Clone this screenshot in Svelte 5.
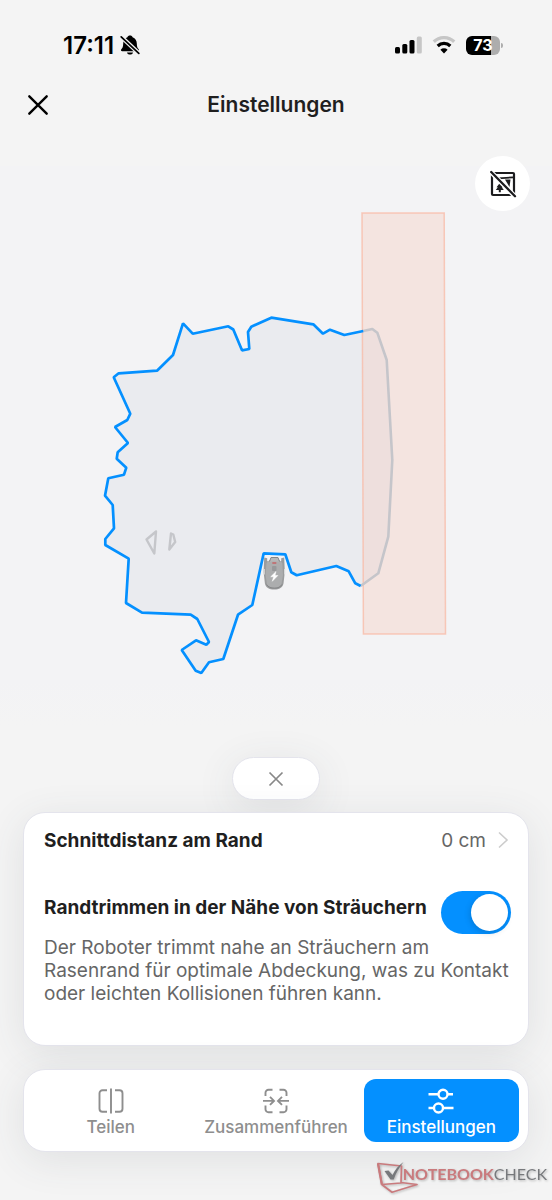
<script lang="ts">
  const boundary =
    '363.3,331 344.3,335 330,329.7 323,333.7 313.3,324.3 271.3,317.7 251.3,326.7 248,332 249.3,349 242,350.3 233.3,329.5 228.3,326.3 192.7,333.7 183,323.3 173,355 157,370.7 118.7,373.3 113.7,377.3 130.3,413.7 127.3,420 115,427 128,443 117.7,452.3 116.7,458.7 126.3,467.7 124,474.7 108.3,478.3 105,495.7 112.7,505 114,528.3 105.3,539 105.3,545 128.7,558.7 126,603 142,612.7 190.7,614.7 197.3,619 209,642 206.3,644.7 196,640.3 181.7,650 195.7,670.7 201.3,673 209,662.3 223.3,659 238,614.7 252.3,605 263.7,553.3 285.3,554.3 291.3,572.3 296.7,575.3 336.3,566 348.7,571.3 355.3,583.3 360.7,586';
  const blockedEdge = '360.7,586 378.3,573.3 388.3,536.7 392.3,460 386.7,360 377.3,332.7 372.3,329 363.3,331';

  let trimNearShrubs = $state(true);
  let active = $state('Einstellungen');
</script>

<div class="screen">
  <div class="status">
    <div class="clock">
      <span>17:11</span>
      <svg width="20" height="20" viewBox="0 0 20 20" aria-hidden="true">
        <path d="M10 .6c1.300 0 2.300.7 2.600 1.700 2.800 1 4.200 3.300 4.200 6.200 0 3.300.7 4.500 1.900 5.700.7.800.3 2-.9 2H2.200c-1.200 0-1.600-1.200-.9-2 1.200-1.200 1.900-2.400 1.900-5.700 0-2.900 1.400-5.200 4.200-6.200C7.700 1.300 8.700.6 10 .6z" />
        <path d="M7 17.400h6c-.3 1.400-1.400 2.200-3 2.200s-2.700-.8-3-2.200z" />
        <path d="M.6 1.200l18.400 17.200" stroke="#f4f4f4" stroke-width="4.200" />
        <path d="M1.200 1.800l17.600 16.600" stroke="#000" stroke-width="1.700" stroke-linecap="round" />
      </svg>
    </div>
    <div class="signals">
      <svg width="27" height="18" viewBox="0 0 27 18" aria-hidden="true">
        <rect x="0" y="11" width="5" height="6.500" rx="1.500" />
        <rect x="7.300" y="8" width="5" height="9.500" rx="1.500" />
        <rect x="14.500" y="4" width="5" height="13.500" rx="1.500" />
        <rect x="21.800" y=".5" width="5" height="17" rx="1.500" fill="#c6c6c6" />
      </svg>
      <svg width="24" height="18" viewBox="0 0 24 18" fill="none" aria-hidden="true">
        <path d="M1.800 5.800a14.600 14.600 0 0 1 20.400 0" stroke="#c6c6c6" stroke-width="3.300" />
        <path d="M5.700 10a9 9 0 0 1 12.600 0" stroke="#000" stroke-width="3.200" />
        <path d="M12 17.400l-3.600-3.700a5.200 5.200 0 0 1 7.200 0z" fill="#000" />
      </svg>
      <div class="battery"><span>73</span><i></i></div>
    </div>
  </div>

  <header>
    <button class="close" aria-label="Schließen">
      <svg width="22" height="22" viewBox="0 0 22 22" aria-hidden="true">
        <path d="M2.300 2.300l17.400 17.400M19.700 2.300L2.300 19.700" stroke="#000" stroke-width="2.400" stroke-linecap="round" />
      </svg>
    </button>
    <h1>Einstellungen</h1>
  </header>

  <main>
    <svg class="map" viewBox="0 166 552 560" role="img" aria-label="Karte">
      <polygon points="{boundary} {blockedEdge}" fill="#eaebef" />
      <polygon points="362,213 444.200,213 445.500,634 363.400,634" fill="#f7cbbd" fill-opacity=".36" stroke="#f8b9a6" stroke-opacity=".75" stroke-width="1.500" />
      <polyline points={blockedEdge} fill="none" stroke="#c5c5ca" stroke-width="2.600" stroke-linejoin="round" />
      <polyline points={boundary} fill="none" stroke="#0490ff" stroke-width="2.700" stroke-linejoin="bevel" />
      <g fill="none" stroke="#c5c6ca" stroke-width="2.400" stroke-linejoin="round">
        <path d="M156 531.500L146.500 539.500L154.300 553.500Z" />
        <path d="M171 533.500L173.300 534.500L175.200 542L169.300 549.500Z" />
      </g>
      <g>
        <path d="M264.200 557.500l3 .8v3h14v-3l3-.8.6 14.500-1.300 11.500c-1 4-4 6-9.300 6s-8.300-2-9.300-6l-1.300-11.500z" fill="#9b9c9d" />
        <path d="M264.200 569v5.500M284.600 569v5.500" stroke="#dcdddd" stroke-width="1.200" />
        <path d="M266.500 563l3-3h9.800l3 3 .7 12-1.500 9c-1 2.500-3.500 3.700-7.200 3.700s-6.300-1.200-7.300-3.700l-1.500-9z" fill="#acadae" />
        <path d="M269.500 561.500l1.500-4h7l1.500 4" fill="#b6b7b8" stroke="#858688" stroke-width="1" />
        <path d="M272.300 563h4" stroke="#c4686a" stroke-width="1.600" />
        <rect x="272" y="566" width="4.500" height="5" rx="1" fill="#98999b" />
        <path d="M266.500 584.500c1.500 2.500 4.500 3.700 8 3.700s6-1.200 7.500-3.700" fill="none" stroke="#858688" stroke-width="1" />
        <path d="M276 571.500l-5.300 5.300h2.900l-1.300 4.500 5.600-5.800H275z" fill="#fff" stroke="#fff" stroke-width=".5" />
      </g>
    </svg>
    <button class="layer" aria-label="Sträucher ausblenden">
      <svg width="28" height="28" viewBox="0 0 28 28" fill="none" aria-hidden="true">
        <rect x="3" y="3" width="22" height="22" rx="1" stroke="#1c1c1e" stroke-width="2.200" />
        <path d="M9 8.300l15-.9" stroke="#1c1c1e" stroke-width="1.700" />
        <path d="M16 9.500h5.500l-1 7.500z" fill="#1c1c1e" />
        <path d="M10.800 13l-3.300 4.200h1.300L6.800 20h3v2.300h2V20h3l-2-2.800h1.300z" fill="#1c1c1e" />
        <path d="M1.500 1.500l25 25.500" stroke="#fff" stroke-width="4.800" />
        <path d="M2.200 2l23.800 24.300" stroke="#1c1c1e" stroke-width="2.300" stroke-linecap="round" />
      </svg>
    </button>
  </main>

  <div class="panel">
    <button class="dismiss" aria-label="Einklappen">
      <svg width="16" height="16" viewBox="0 0 16 16" aria-hidden="true">
        <path d="M1.500 1.500l13 13M14.500 1.500l-13 13" stroke="#888" stroke-width="1.700" />
      </svg>
    </button>

    <section class="card">
      <button class="distance">
        <strong>Schnittdistanz am Rand</strong>
        <span>0 cm</span>
        <svg width="12" height="18" viewBox="0 0 12 18" fill="none" aria-hidden="true">
          <path d="M2 1.500l8 7.500-8 7.500" stroke="#ccc" stroke-width="1.600" />
        </svg>
      </button>
      <div class="trim">
        <label for="trim">Randtrimmen in der Nähe von Sträuchern</label>
        <input id="trim" type="checkbox" role="switch" aria-describedby="trim-info" bind:checked={trimNearShrubs} />
      </div>
      <p id="trim-info">Der Roboter trimmt nahe an Sträuchern am Rasenrand für optimale Abdeckung, was zu Kontakt oder leichten Kollisionen führen kann.</p>
    </section>

    <nav>
      <button class:active={active === 'Teilen'} onclick={() => (active = 'Teilen')}>
        <svg width="28" height="26" viewBox="0 0 28 26" fill="none" stroke="currentColor" stroke-width="1.900" aria-hidden="true">
          <path d="M10 2.200H5.500a3 3 0 0 0-3 3v15.600a3 3 0 0 0 3 3H10M14 .5v25M18 2.200h4.500a3 3 0 0 1 3 3v15.600a3 3 0 0 1-3 3H18" />
        </svg>
        <span>Teilen</span>
      </button>
      <button class:active={active === 'Zusammenführen'} onclick={() => (active = 'Zusammenführen')}>
        <svg width="28" height="26" viewBox="0 0 28 26" fill="none" stroke="currentColor" stroke-width="1.900" aria-hidden="true">
          <path d="M10.500 1.700H6.500a3 3 0 0 0-3 3V8M3.500 17.500v3.800a3 3 0 0 0 3 3h4M17.500 1.700h4a3 3 0 0 1 3 3V8M24.500 17.500v3.800a3 3 0 0 1-3 3h-4M1 12.900h10.500M8 8.900l4 4-4 4M27 12.900H16.500M20 8.900l-4 4 4 4" />
        </svg>
        <span>Zusammenführen</span>
      </button>
      <button class:active={active === 'Einstellungen'} onclick={() => (active = 'Einstellungen')}>
        <svg width="28" height="26" viewBox="0 0 28 26" fill="none" stroke="currentColor" stroke-width="2.400" aria-hidden="true">
          <path d="M1.500 6.300h10M20.500 6.300h5.500M1.500 20h5.500M16 20h10.500" />
          <circle cx="16" cy="6.300" r="4.500" /><circle cx="11.500" cy="20" r="4.500" />
        </svg>
        <span>Einstellungen</span>
      </button>
    </nav>
  </div>

  <footer>
    <svg width="46" height="34" viewBox="0 0 46 34" fill="none" aria-hidden="true">
      <path d="M2 2.500l23.500 2.500-.500 17-19 1.500zM5.800 23.500L16 31.200l25-7.700-16-2" stroke="#c97a7d" stroke-width="1.700" stroke-linejoin="round" />
      <path d="M2 2.500l3.800 21" stroke="#c97a7d" stroke-width="2.200" />
      <path d="M8.500 10l4-.5 4 4.500C19 8.500 22.500 4.500 27.500 1c-4.500 5.500-7.500 11-9.800 17.500h-3.200z" fill="#77797c" />
    </svg>
    <span><b>NOTEBOOK</b>CHECK</span>
  </footer>
</div>

<style>
  :global(body) { margin: 0; background: #f4f4f4; }
  .screen {
    min-height: 100vh;
    display: flex;
    flex-direction: column;
    overflow: hidden;
    box-sizing: border-box;
    font-family: Inter, "Liberation Sans", sans-serif;
    color: #1f1f1f;
  }
  button { font: inherit; color: inherit; border: 0; padding: 0; background: none; cursor: pointer; }
  svg { display: block; flex: none; }
  .status {
    display: flex;
    justify-content: space-between;
    align-items: center;
    height: 30px;
    padding: 30px 52px 0 63px;
    color: #000;
  }
  .clock { display: flex; align-items: center; gap: 6px; font-size: 24px; font-weight: 600; }
  .signals { display: flex; align-items: center; gap: 10px; }
  .battery {
    position: relative;
    width: 34px;
    height: 19px;
    border-radius: 6px;
    background: linear-gradient(to right, #000 73%, #adadad 73%);
    color: #fff;
    font-size: 16px;
    font-weight: 700;
    line-height: 19px;
    text-align: center;
  }
  .battery i {
    position: absolute;
    right: -3px;
    top: 7px;
    width: 2px;
    height: 5px;
    border-radius: 0 2px 2px 0;
    background: #adadad;
  }
  header {
    display: grid;
    grid-template-columns: 28px 1fr 28px;
    align-items: center;
    height: 90px;
    padding: 0 24px;
    margin-bottom: 16px;
  }
  .close { display: grid; place-items: center; height: 28px; }
  h1 { margin: 0; font-size: 21px; line-height: 28px; font-weight: 600; text-align: center; }
  main { position: relative; background: linear-gradient(#f3f3f5 92%, #f4f4f4); }
  .map { width: 100%; height: auto; }
  .layer {
    position: absolute;
    top: -10px;
    right: 22px;
    width: 55px;
    height: 55px;
    display: grid;
    place-items: center;
    border-radius: 50%;
    background: #fff;
  }
  .panel { display: flex; flex-direction: column; align-items: center; padding: 31px 23px 0; }
  .dismiss, .card, nav {
    box-sizing: border-box;
    border: 1px solid #e4e4ec;
    background: #fff;
    box-shadow: 0 8px 40px rgba(60, 75, 85, 0.11);
  }
  .dismiss { width: 88px; height: 43px; border-radius: 22px; display: grid; place-items: center; }
  .card { width: 100%; margin-top: 12px; padding: 13px 17px 40px 20px; border-radius: 22px; }
  .distance { display: flex; align-items: center; width: 100%; height: 28px; padding-right: 2px; text-align: left; }
  strong, label { font-size: 19px; font-weight: 700; }
  strong { flex: 1; }
  .distance span { font-size: 19px; color: #666; margin-right: 11px; }
  .trim { display: flex; justify-content: space-between; margin-top: 37px; }
  label { line-height: 34px; white-space: nowrap; }
  input {
    appearance: none;
    flex: none;
    width: 70px;
    height: 43px;
    margin: 0;
    border-radius: 22px;
    background: #c7c7cc;
    cursor: pointer;
  }
  input::before {
    content: "";
    display: block;
    width: 37px;
    height: 37px;
    margin: 3px;
    border-radius: 50%;
    background: #fff;
    box-shadow: -1px 2px 6px rgba(0, 0, 0, 0.15);
  }
  input:checked { background: #0490ff; }
  input:checked::before { margin-left: 30px; }
  p { margin: 2px 0 0; font-size: 19px; line-height: 23px; color: #666; }
  nav {
    display: grid;
    grid-template-columns: 1fr 1fr 1fr;
    gap: 10px;
    width: 100%;
    margin-top: 23px;
    padding: 9px;
    border-radius: 22px;
  }
  nav button {
    display: flex;
    flex-direction: column;
    align-items: center;
    gap: 3px;
    height: 63px;
    padding-top: 9px;
    box-sizing: border-box;
    border-radius: 12px;
    color: #8e8e8e;
    font-size: 17px;
    line-height: 20px;
    font-weight: 500;
  }
  nav button.active { color: #fff; background: #0490ff; }
  footer {
    display: flex;
    justify-content: flex-end;
    align-items: flex-start;
    padding: 9px 5px 4px 0;
    font-family: Lato, sans-serif;
    font-size: 16px;
    line-height: 26px;
    color: #77797c;
    filter: drop-shadow(1px 1px 1px rgba(0, 0, 0, 0.25));
  }
  footer span { margin-left: -19px; }
  footer b { color: #c97a7d; }
</style>
